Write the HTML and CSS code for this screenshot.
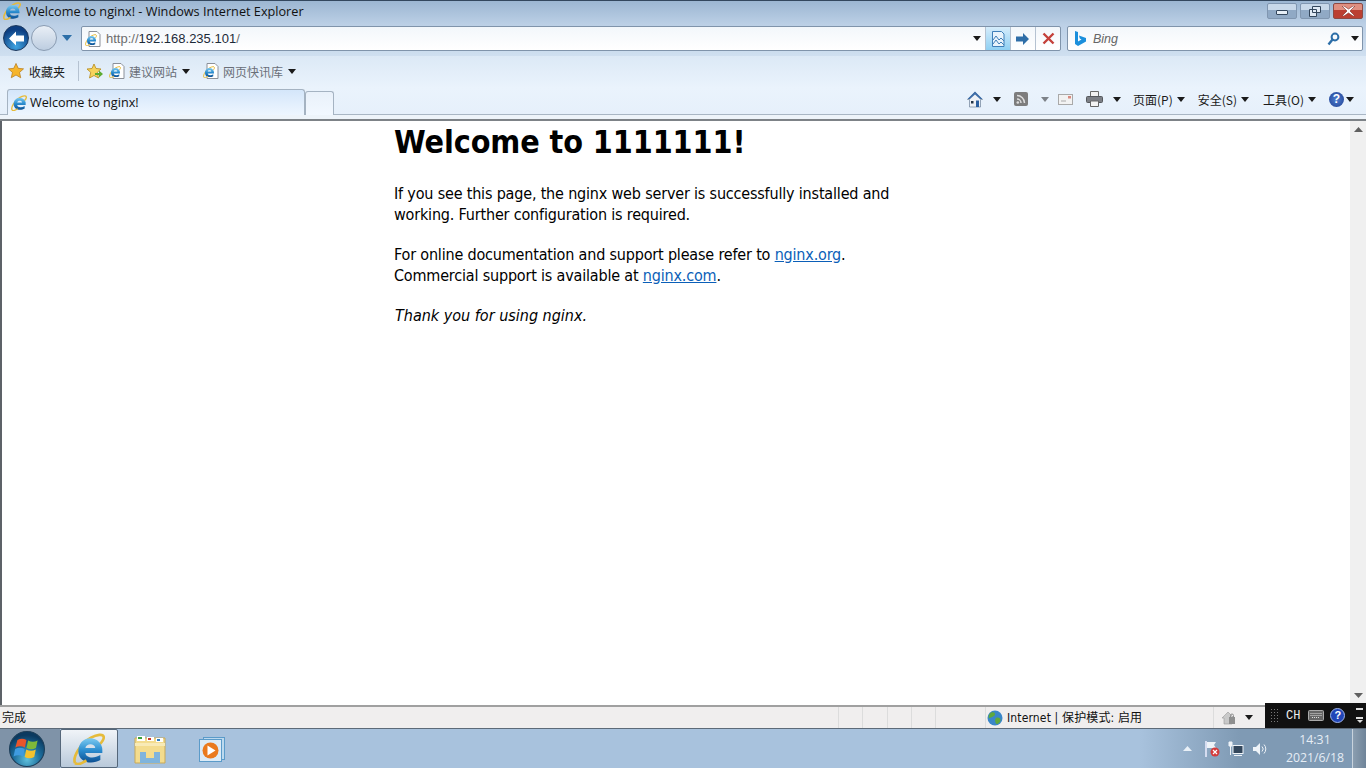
FILE: index.html
```html
<!DOCTYPE html>
<html lang="en">
<head>
<meta charset="utf-8">
<title>Welcome to nginx!</title>
<link rel="stylesheet" href="styles.css">
</head>
<body>
<svg class="defs" width="0" height="0" aria-hidden="true">
  <defs>
    <linearGradient id="eg" x1="0" y1="0" x2="0" y2="1"><stop offset="0" stop-color="#7ccaf0"/><stop offset=".5" stop-color="#2a8ccf"/><stop offset="1" stop-color="#0c4f92"/></linearGradient>
    <symbol id="ie" viewBox="0 0 24 24">
      <path d="M1.500 22.500C-.5 18 6 7.500 13.500 3.500c4.500-2.400 9-3 9.500-.7.300 1.500-1 3.700-3 5.700" fill="none" stroke="#e6bb3a" stroke-width="2"/>
      <path d="M13 4a9 9 0 0 1 9 9.500V15H9.300c.4 3.800 6.500 4.500 11.200 1.500V20.300C14.500 24 4 22.500 4 13.500 4 8.500 7.500 4 13 4zM9.300 11.200h7.400c-.3-3.600-6.800-3.600-7.400 0z" fill="url(#eg)" fill-rule="evenodd"/>
      <path d="M1.500 22.500c1.700 1.600 5.500.2 8.500-2" fill="none" stroke="#e6bb3a" stroke-width="2"/>
    </symbol>
    <symbol id="pg" viewBox="0 0 16 16">
      <path d="M4 .5h8l3 3v12H4z" fill="#fff" stroke="#8b9099"/>
      <use href="#ie" x="0" y="3" width="12" height="12"/>
    </symbol>
    <symbol id="star" viewBox="0 0 18 18">
      <path d="M9 .5l2.500 5.500 6 .6-4.500 4 1.300 6L9 13.500l-5.300 3.100 1.300-6-4.500-4 6-.6z" fill="#f6b52c" stroke="#b5791a" stroke-width=".8"/>
    </symbol>
  </defs>
</svg>
<div class="window">
  <header class="chrome">
    <div class="titlebar">
      <svg class="i18"><use href="#ie"/></svg>
      <span class="title">Welcome to nginx! - Windows Internet Explorer</span>
      <div class="caption">
        <span class="cap cap-min"><i class="min-glyph"></i></span>
        <span class="cap cap-max">
          <svg width="12" height="11" viewBox="0 0 12 11"><path d="M3.500.5h8v6h-8zM.5 3.500h7v7h-7z" fill="#dfe9f4" stroke="#33465c"/></svg>
        </span>
        <span class="cap cap-close">
          <svg width="13" height="10" viewBox="0 0 13 10"><path d="M2 0l4.500 3L11 0h2L8 5l5 5h-2L6.500 7 2 10H0l5-5-5-5z" fill="#fff" stroke="#7c2a22" stroke-width=".6"/></svg>
        </span>
      </div>
    </div>
    <div class="navrow">
      <div class="navbtns">
        <span class="back">
          <svg width="17" height="15" viewBox="0 0 17 15"><path d="M8 .5L1 7.500l7 7V10.500h8v-6H8z" fill="#fff"/></svg>
        </span>
        <span class="fwd"></span>
        <svg class="navdrop" width="10" height="7" viewBox="0 0 10 7"><path d="M0 0h10L5 6z" fill="#2d6fa8"/></svg>
      </div>
      <div class="addr">
        <svg class="i16 addr-ico"><use href="#pg"/></svg>
        <span class="url"><span class="dim">http://</span>192.168.235.101<span class="dim">/</span></span>
        <i class="tri addr-tri"></i>
        <span class="addrbtn compat">
          <svg width="16" height="16" viewBox="0 0 16 16"><path d="M2.500.5h9l2.500 2.500v12.500h-11.500z" fill="#e8f3fb" stroke="#3f7fb8"/><path d="M3 9l3-4 3 4 2-2 3 3M3 13l3-4 3 4 2-2 3 3" fill="none" stroke="#3f7fb8"/></svg>
        </span>
        <span class="addrbtn">
          <svg width="16" height="14" viewBox="0 0 16 14"><path d="M8 1l6 6-6 6V9.500H1v-5h7z" fill="#2f6ea8"/></svg>
        </span>
        <span class="addrbtn">
          <svg width="13" height="13" viewBox="0 0 13 13"><path d="M1.500 1.500l10 10M11.500 1.500l-10 10" stroke="#c4403a" stroke-width="2.400"/></svg>
        </span>
      </div>
      <div class="search">
        <svg class="bing" width="12" height="16" viewBox="0 0 12 16"><path d="M1 0l3 1v9.500l3.500-2-1.700-1-.8-3 7 2.500v3.500L4 15 1 13z" fill="#1b8fdc"/></svg>
        <span class="bingtext">Bing</span>
        <svg class="lens" width="13" height="14" viewBox="0 0 13 14"><circle cx="8" cy="5" r="3.400" fill="none" stroke="#2c6ea8" stroke-width="2"/><path d="M5.500 7.500L1.500 12.500" stroke="#2c6ea8" stroke-width="2.400"/></svg>
        <i class="tri search-tri"></i>
      </div>
    </div>
    <div class="favrow">
      <span class="fav">
        <svg class="i16"><use href="#star"/></svg>
        <span class="favlabel">收藏夹</span>
      </span>
      <span class="sep"></span>
      <svg class="addfav" width="18" height="16" viewBox="0 0 18 16"><path d="M8 1l2 4.500 5 .5-3.700 3.300L12.500 15 8 12.500 3.500 15l1.200-5.700L1 6l5-.5z" fill="#f6d35c" stroke="#b5891a" stroke-width=".8"/><path d="M9 10h4V7.500l4 3.500-4 3.500V12H9z" fill="#5cab32"/></svg>
      <span class="link link-a"><svg class="i16"><use href="#pg"/></svg><span>建议网站</span><i class="tri"></i></span>
      <span class="link"><svg class="i16"><use href="#pg"/></svg><span>网页快讯库</span><i class="tri"></i></span>
    </div>
    <div class="tabrow">
      <div class="tab">
        <svg class="i16"><use href="#ie"/></svg>
        <span class="tabtext">Welcome to nginx!</span>
      </div>
      <div class="newtab"></div>
      <div class="cmd">
        <svg class="cmd-i home" width="16" height="17" viewBox="0 0 16 17"><path d="M8 1L.5 8.500h2V16h11V8.500h2z" fill="#eef1f5" stroke="#6d8199" stroke-width=".7"/><path d="M8 .5L.5 8h2.500L8 3.500 13 8h2.500z" fill="#3f6ea8"/><path d="M4 10h2.500v2.500H4z" fill="#234"/><path d="M9 9.500h3V16H9z" fill="#2a5f9f"/></svg>
        <i class="tri tri-home"></i>
        <svg class="cmd-i rss" width="14" height="14" viewBox="0 0 14 14"><rect width="14" height="14" rx="2" fill="#7d7d7d"/><path d="M3 3.500a7.500 7.500 0 0 1 7.500 7.500M3 7a4 4 0 0 1 4 4" fill="none" stroke="#ddd" stroke-width="1.500"/><circle cx="3.800" cy="10.500" r="1.300" fill="#ddd"/></svg>
        <i class="tri tri-soft tri-rss"></i>
        <svg class="cmd-i mail" width="15" height="11" viewBox="0 0 15 11"><rect x=".5" y=".5" width="14" height="10" fill="#f2f2f2" stroke="#a9a9a9"/><path d="M10 2h3v2.500h-3z" fill="#d98a80"/><path d="M3 7h5" stroke="#aaa"/></svg>
        <svg class="cmd-i print" width="17" height="16" viewBox="0 0 17 16"><path d="M4.500.5h8v5h-8z" fill="#f2f2f2" stroke="#6a6a6a"/><rect x=".5" y="5.500" width="16" height="6" rx="1" fill="#7c7f85" stroke="#55585d"/><path d="M4.500 10h8v5.500h-8z" fill="#f4f4f4" stroke="#666"/></svg>
        <i class="tri tri-print"></i>
        <span class="menu menu-p">页面(P)<i class="tri"></i></span>
        <span class="menu menu-s">安全(S)<i class="tri"></i></span>
        <span class="menu menu-o">工具(O)<i class="tri"></i></span>
        <span class="helpico">?</span>
        <i class="tri tri-help"></i>
      </div>
    </div>
  </header>

  <div class="viewport">
    <main class="page">
      <h1>Welcome to 1111111!</h1>
      <p>If you see this page, the nginx web server is successfully installed and working. Further configuration is required.</p>
      <p>For online documentation and support please refer to <a href="#">nginx.org</a>.<br>Commercial support is available at <a href="#">nginx.com</a>.</p>
      <p><em>Thank you for using nginx.</em></p>
    </main>
    <div class="scrollbar">
      <svg class="sarrow" width="9" height="5" viewBox="0 0 9 5"><path d="M0 5l4.500-5L9 5z" fill="#606060"/></svg>
      <svg class="sarrow" width="9" height="5" viewBox="0 0 9 5"><path d="M0 0l4.500 5L9 0z" fill="#606060"/></svg>
    </div>
  </div>

  <footer class="status">
    <span class="done">完成</span>
    <div class="panes">
      <span class="pane pane-a"></span><span class="pane pane-b"></span><span class="pane pane-a"></span><span class="pane pane-a"></span><span class="pane pane-c"></span>
      <span class="pane pane-zone">
        <svg class="i16" viewBox="0 0 16 16"><circle cx="8" cy="8" r="7.500" fill="#3a86c8"/><path d="M4 2.500c3-1 5 1 3.500 3S3 7 2 8.500c-1-2 0-4.500 2-6zM9 8c2-1 5 0 4.500 2.500S10 15 9 13.500 7.500 9 9 8z" fill="#5ea83c"/></svg>
        <span class="zonetext">Internet | 保护模式: 启用</span>
      </span>
      <span class="pane pane-sec">
        <svg width="16" height="15" viewBox="0 0 16 15"><path d="M1 8l6-6 6 6-2 0v6H3V8z" fill="#c9c9c9" stroke="#999" stroke-width=".6"/><rect x="8" y="7" width="6" height="7" fill="#8f8f8f"/><path d="M9.500 7V5.500a1.500 1.500 0 0 1 3 0V7" fill="none" stroke="#8f8f8f"/></svg>
        <i class="tri tri-sec"></i>
      </span>
    </div>
  </footer>

  <nav class="taskbar">
    <span class="start">
      <svg width="36" height="36" viewBox="0 0 34 34">
        <defs><radialGradient id="orb" cx=".5" cy=".8" r=".7"><stop offset="0" stop-color="#5fc0dc"/><stop offset=".55" stop-color="#1c6d9c"/><stop offset="1" stop-color="#0b3a60"/></radialGradient></defs>
        <circle cx="17" cy="17" r="16.500" fill="url(#orb)" stroke="#1c3d58"/>
        <path d="M8 8.500c3-1.500 5.500-1.500 8.500 0L15 15.500c-3-1.500-6-1.500-9 0z" fill="#e9552b"/>
        <path d="M18 9c3 1.500 6 1.500 9 0l-1.500 7c-3 1.500-6 1.500-9 0z" fill="#7fb93a"/>
        <path d="M5.800 17c3-1.500 6-1.500 9 0l-1.500 7c-3-1.500-6-1.500-9 0z" fill="#3f9be0"/>
        <path d="M16.300 17.500c3 1.500 6 1.500 9 0l-1.500 7c-3 1.500-6 1.500-9 0z" fill="#f5c22f"/>
      </svg>
    </span>
    <span class="tb tb-active"><svg width="32" height="32"><use href="#ie" width="32" height="32"/></svg></span>
    <span class="tb">
      <svg width="32" height="30" viewBox="0 0 32 30"><path d="M1 3h30v25H1z" fill="#f3dc8e" stroke="#c7a95a"/><path d="M3 1h8v5H3zM13 2h7v4h-7zM22 3h7v4h-7z" fill="#fff"/><path d="M4 2h4v2H4z" fill="#3aa03a"/><path d="M14 3h3v2h-3z" fill="#c9392e"/><path d="M23 4h3v2h-3z" fill="#2f7fc4"/><path d="M1 8h30v3H1z" fill="#f8eab6"/><path d="M6 17h20v11H6z" fill="#7fb4dc"/><path d="M12 17h8v6H12z" fill="#f3dc8e"/></svg>
    </span>
    <span class="tb">
      <svg width="26" height="26" viewBox="0 0 26 26"><rect x="4.500" y=".5" width="21" height="22" fill="#bcd9ee" stroke="#5b9bc9"/><rect x=".5" y="2.500" width="22" height="22" fill="#dcebf7" stroke="#5b9bc9"/><circle cx="11.500" cy="13.500" r="8" fill="#ea7a1e"/><path d="M8.500 8.500l8 5-8 5z" fill="#fff"/></svg>
    </span>
    <div class="tray">
      <svg class="tray-up" width="9" height="5" viewBox="0 0 9 5"><path d="M0 5l4.500-5L9 5z" fill="#e9f0f7"/></svg>
      <svg class="tray-i" width="16" height="18" viewBox="0 0 16 18"><path d="M2 1v16" stroke="#eef" stroke-width="1.500"/><path d="M3 2h9l-2 3 2 3H3z" fill="#eef3f8"/><circle cx="11" cy="12" r="4.500" fill="#d43c3c"/><path d="M9 10l4 4M13 10l-4 4" stroke="#fff" stroke-width="1.200"/></svg>
      <svg class="tray-i" width="16" height="16" viewBox="0 0 16 16"><rect x="5" y="4.500" width="10" height="8" fill="#33475c" stroke="#eef3f8"/><path d="M1 1v4h3V1zM2.500 5v9" fill="#eef3f8" stroke="#eef3f8"/><path d="M6 14.500h8" stroke="#eef3f8"/></svg>
      <svg class="tray-i" width="16" height="16" viewBox="0 0 16 16"><path d="M1 6h3l4-4v12l-4-4H1z" fill="#eef3f8"/><path d="M10 5.500a3.500 3.500 0 0 1 0 5M12 3.500a6.500 6.500 0 0 1 0 9" fill="none" stroke="#eef3f8"/></svg>
      <div class="clock"><span>14:31</span><span>2021/6/18</span></div>
      <span class="showdesk"></span>
    </div>
  </nav>

  <div class="langbar">
    <span class="grip"></span>
    <span class="ch">CH</span>
    <svg width="16" height="11" viewBox="0 0 16 11"><rect x=".5" y=".5" width="15" height="10" rx="1" fill="#666" stroke="#aaa"/><path d="M2.500 3.500h11M2.500 5.500h11M4 7.500h8" stroke="#ddd" stroke-dasharray="1 1"/></svg>
    <span class="langhelp">?</span>
    <span class="langmore"><i class="lm-bar"></i><i class="lm-bar"></i><i class="lm-tri"></i></span>
  </div>
</div>
</body>
</html>
```

FILE: styles.css
```css
* { box-sizing: border-box; }
html, body { margin: 0; height: 100%; overflow: hidden; }
body { font-family: "DejaVu Sans", "Noto Sans CJK SC", sans-serif; }
.defs { position: absolute; }
.i16 { width: 16px; height: 16px; flex: none; display: block; }
.i18 { width: 18px; height: 18px; flex: none; display: block; margin-top: -4px; }
.window { position: relative; display: flex; flex-direction: column; width: 1366px; height: 768px; }

.chrome {
  flex: none; height: 121px; display: flex; flex-direction: column;
  border-bottom: 2px solid #7d8287;
  font-family: "Noto Sans CJK SC", sans-serif;
}
.titlebar {
  height: 25px; flex: none; display: flex; align-items: center; padding-left: 3px;
  background: linear-gradient(#9cb6d2, #bcd0e6);
  border-top: 1px solid #33475e;
}
.title { font: 12.700px "Open Sans", "Liberation Sans", sans-serif; color: #111; margin-left: 5px; margin-top: -4px; }
.caption { margin-left: auto; display: flex; align-self: flex-start; gap: 3px; margin-right: 3px; margin-top: 2px; }
.cap {
  width: 30px; height: 16px; display: flex; align-items: center; justify-content: center;
  border: 1px solid #8096b0; border-radius: 2px;
  background: linear-gradient(#c8d8e9 0 45%, #90a9c5 46% 100%);
}
.cap-close { background: linear-gradient(#e08f80 0 45%, #bb3f32 46% 100%); border-color: #8c4a44; }
.min-glyph { width: 12px; height: 5px; border: 1px solid #33465c; background: #e6eef6; margin-top: 2px; border-radius: 1px; }

.navrow {
  height: 31px; flex: none; display: flex; align-items: flex-start; padding-top: 1px;
  background: linear-gradient(#bcd0e6, #cfdff0);
}
.navbtns { width: 81px; flex: none; display: flex; align-items: center; padding-left: 3px; height: 24px; }
.back {
  width: 26px; height: 26px; border-radius: 50%; flex: none; display: flex; align-items: center; justify-content: center;
  background: radial-gradient(circle at 50% 85%, #3fa4e2, #0d3f82 72%); border: 1px solid #19365c;
}
.fwd {
  width: 26px; height: 26px; border-radius: 50%; flex: none; margin-left: 2px;
  background: linear-gradient(#e9eff6, #bdcde0); border: 1px solid #8a9cb2;
}
.navdrop { margin-left: 5px; }
.addr {
  width: 980px; height: 25px; flex: none; display: flex; align-items: center;
  border: 1px solid #8094ab; border-radius: 2px;
  padding-left: 3px; background: linear-gradient(#f3f7fb, #fff);
}
.addr-ico { margin-right: 5px; }
.url { font: 13px "Liberation Sans", sans-serif; color: #1c2a38; }
.dim { color: #6d6d6d; }
.tri { display: inline-block; width: 0; height: 0; border: 4px solid transparent; border-top: 5px solid #1a1a1a; border-bottom: 0; flex: none; }
.addr-tri { margin-left: auto; margin-right: 4px; }
.addrbtn { width: 25px; height: 23px; flex: none; display: flex; align-items: center; justify-content: center; border-left: 1px solid #b5c2d1; }
.compat { background: linear-gradient(#d5ecfb, #8fd0f3); }
.search {
  margin-left: 6px; width: 296px; height: 25px; flex: none; display: flex; align-items: center; padding-left: 6px;
  background: linear-gradient(#f3f7fb, #fff); border: 1px solid #8094ab; border-radius: 2px;
}
.bingtext { font: italic 12.500px "Liberation Sans", sans-serif; color: #666; margin-left: 7px; }
.lens { margin-left: auto; margin-right: 11px; }
.search-tri { margin-right: 3px; }

.favrow {
  height: 32px; flex: none; display: flex; align-items: center; padding: 0 0 2px 8px;
  background: linear-gradient(#dce9f6, #eaf3fc);
  font-size: 12px;
}
.fav { display: flex; align-items: center; gap: 5px; color: #1a1a1a; width: 70px; flex: none; }
.sep { width: 1px; height: 20px; background: #b5c2d1; flex: none; }
.addfav { margin-left: 7px; flex: none; }
.link { display: flex; align-items: center; gap: 4px; color: #6a6f78; flex: none; }
.link .tri { margin-left: 1px; }
.link-a { margin-left: 5px; margin-right: 13px; }

.tabrow {
  flex: 1; display: flex; align-items: flex-end; padding: 0 0 4px 7px;
  background: linear-gradient(#eaf3fc 0, #e6f0fb 26px, #a9b6c4 26px, #a9b6c4 27px, #eef4fa 27px);
}
.tab {
  width: 298px; height: 26px; display: flex; align-items: center; gap: 3px; padding-left: 3px;
  background: linear-gradient(#d4e6fa, #eef6ff); border: 1px solid #a5b3c2; border-bottom: 0; border-radius: 3px 3px 0 0;
  font: 12.650px "Open Sans", "Liberation Sans", sans-serif; color: #111;
}
.tabtext { margin-top: -2px; }
.newtab { width: 29px; height: 24px; background: linear-gradient(#e9f1fa, #f2f8ff); border: 1px solid #a5b3c2; border-bottom: 0; border-radius: 3px 3px 0 0; }
.cmd { margin-left: auto; display: flex; align-items: center; height: 22px; padding-right: 12px; color: #1a1a1a; font-size: 12px; align-self: flex-start; }
.tri-home { margin-left: 10px; }
.rss { margin-left: 13px; }
.tri-soft { border-top-color: #7d8288; }
.tri-rss { margin-left: 13px; }
.mail { margin-left: 9px; }
.print { margin-left: 13px; }
.tri-print { margin-left: 10px; }
.menu { display: inline-flex; align-items: center; gap: 4px; }
.menu-p { margin-left: 12px; }
.menu-s { margin-left: 13px; }
.menu-o { margin-left: 14px; }
.helpico {
  width: 15px; height: 15px; border-radius: 50%; margin-left: 13px; background: radial-gradient(#4f7fd0, #1f3f92);
  color: #fff; font: bold 12px/15px "Liberation Sans", sans-serif; text-align: center;
}
.tri-help { margin-left: 2px; }

.viewport { flex: 1; min-height: 0; display: flex; background: #fff; border-left: 2px solid #5d6268; }
.page {
  flex: 1; color: #000; font-family: "DejaVu Sans", sans-serif; font-stretch: condensed; font-size: 16px; line-height: 21px;
  padding-left: 392px; letter-spacing: -0.18px;
}
.page h1 { font-size: 32px; line-height: 39px; margin: 2px 0 21px; font-weight: bold; letter-spacing: -0.1px; }
.page p { width: 510px; margin: 0 0 19px; }
.page em { letter-spacing: 0; margin-left: 1px; }
.page a { color: #0b5fb8; text-decoration: underline; }
.scrollbar { width: 16px; flex: none; display: flex; flex-direction: column; justify-content: space-between; align-items: center; padding: 6px 0 7px; background: #f0f0f0; }

.status {
  height: 23px; flex: none; display: flex; align-items: center; justify-content: space-between;
  background: #f0eeee; border-top: 2px solid #a0a0a0; font: 12px "Noto Sans CJK SC", sans-serif; color: #111; padding-left: 2px;
}
.done { margin-top: -2px; }
.panes { display: flex; height: 100%; }
.pane { border-left: 1px solid #dcdcdc; display: flex; align-items: center; }
.pane-a { width: 24px; }
.pane-b { width: 25px; }
.pane-c { width: 50px; }
.pane-zone { width: 228px; gap: 4px; padding-left: 1px; }
.zonetext { font-family: "DejaVu Sans", "Noto Sans CJK SC", sans-serif; font-stretch: condensed; letter-spacing: 0.15px; margin-top: -2px; }
.pane-sec { width: 153px; padding-left: 7px; gap: 8px; }

.taskbar {
  height: 40px; flex: none; display: flex; align-items: center; border-top: 1px solid #5d6a78;
  background: linear-gradient(90deg, #a8c2dd 0, #a8c2dd 1140px, #7f9ab4 1240px, #7f9ab4 1366px);
}
.start { width: 60px; height: 100%; flex: none; display: flex; align-items: center; justify-content: center; background: #7f93a8; padding-right: 6px; }
.tb { width: 60px; height: 100%; flex: none; display: flex; align-items: center; justify-content: center; padding-top: 2px; margin-left: 2px; }
.tb-active { width: 58px; margin-left: 0; padding-top: 0; background: linear-gradient(#f0f4f8, #b9c9da); border: 1px solid #55677a; border-radius: 2px; }
.tray { margin-left: auto; display: flex; align-items: center; height: 100%; color: #e6edf4; }
.tray-up { margin-right: 12px; }
.tray-i { margin-right: 8px; }
.clock { display: flex; flex-direction: column; align-items: center; font: 12.300px/18px "Open Sans", "Liberation Sans", sans-serif; width: 74px; margin-left: 2px; }
.showdesk { width: 14px; height: 100%; background: linear-gradient(90deg, #8b9eb0, #6f8499); border-left: 1px solid #c8d3dd; }

.langbar {
  position: absolute; left: 1265px; top: 703px; width: 101px; height: 25px; background: #111; display: flex; align-items: center; color: #eee;
}
.grip { width: 9px; height: 15px; margin-left: 5px; background: radial-gradient(#777 1px, transparent 1px) 0 0 / 3px 3px; }
.ch { font: 12px "Liberation Mono", monospace; margin-left: 7px; margin-right: 8px; }
.langhelp { width: 15px; height: 15px; border-radius: 50%; background: #2146b8; border: 1px solid #9fb4e8; color: #fff; font: bold 11px/13px "Liberation Sans", sans-serif; text-align: center; margin-left: 6px; }
.langmore { width: 7px; margin-left: 11px; display: flex; flex-direction: column; align-items: center; }
.lm-bar { display: block; width: 7px; height: 2px; background: #ddd; margin-bottom: 7px; }
.lm-bar + .lm-bar { margin-bottom: 0; }
.lm-tri { display: block; width: 0; height: 0; border: 3.500px solid transparent; border-top: 3px solid #ddd; border-bottom: 0; margin-top: 1px; }
```
